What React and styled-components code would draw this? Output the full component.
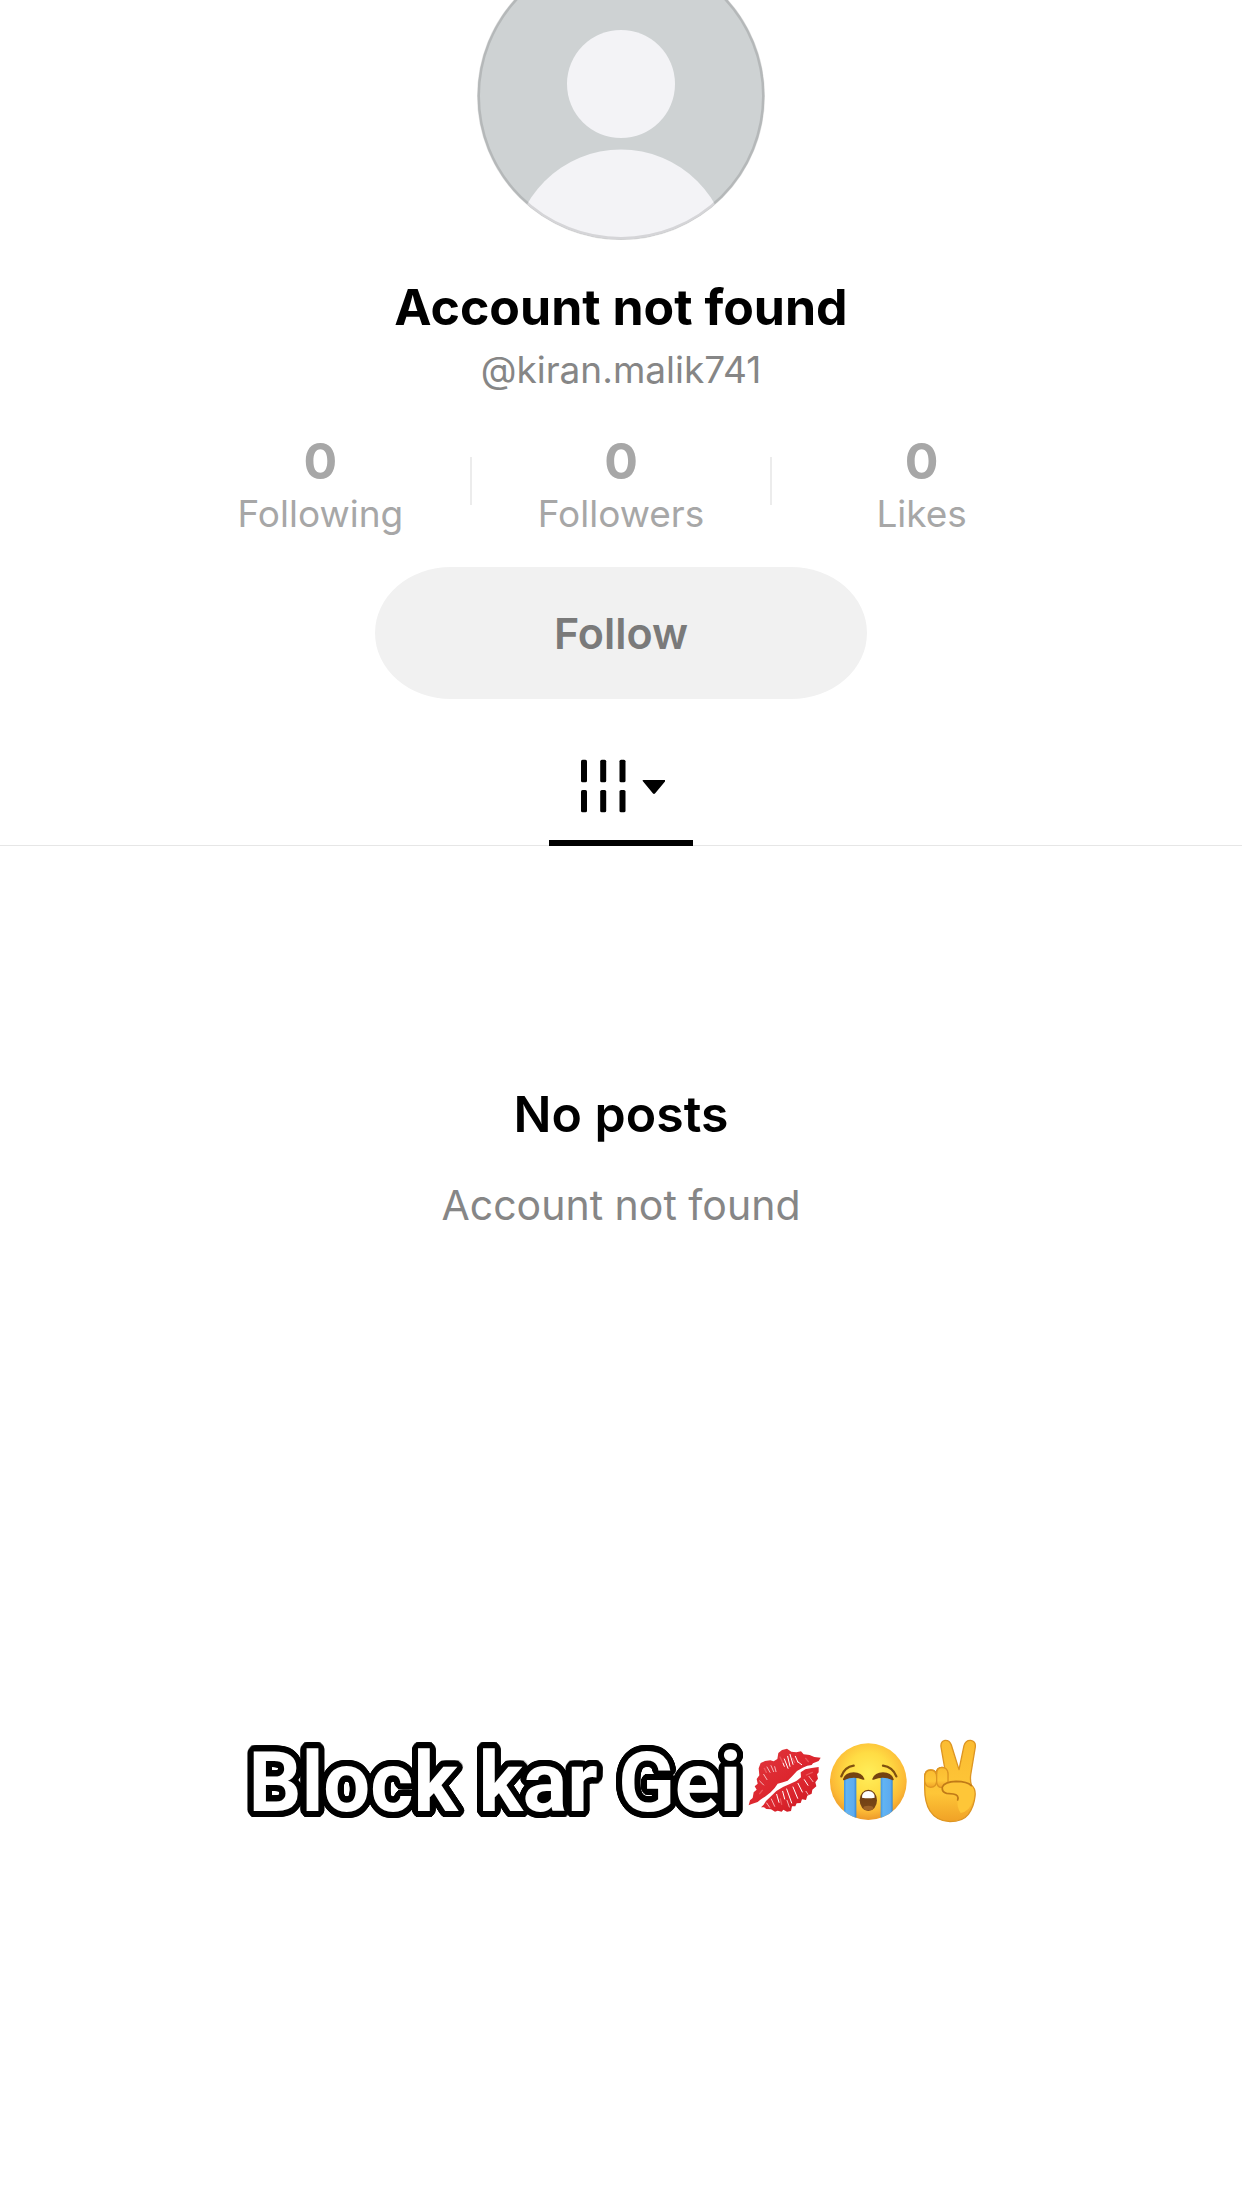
import React from 'react';
import styled, { createGlobalStyle } from 'styled-components';

const GlobalStyle = createGlobalStyle`
body{
    margin: 0;
    background: #fff;
    font-family: Inter, "Liberation Sans", sans-serif;
}
`;

// Rounded outline made of shadows set round a circle
const outline = (radius, color) =>
    Array.from({ length: 32 }, (_, i) => {
        const a = (i / 32) * Math.PI * 2;
        return `${(Math.cos(a) * radius).toFixed(2)}px ${(Math.sin(a) * radius).toFixed(2)}px 0 ${color}`;
    }).join(', ');

const Page = styled.div`
width: 100%;
min-height: 100vh;
display: flex;
flex-direction: column;
overflow: hidden;
background: #fff;
`;

//                         Profile Header                       //

const ProfileHeader = styled.header`
display: flex;
flex-direction: column;
align-items: center;
`;

const AvatarImage = styled.svg`
width: 288px;
height: 288px;
margin-top: -48px;
`;

const ProfileName = styled.h1`
margin: 37px 0 0;
font-size: 50px;
line-height: 60px;
font-weight: 700;
color: #000;
`;

const Handle = styled.p`
margin: 9px 0 0;
font-size: 37px;
line-height: 48px;
color: #868686;
`;

const Stats = styled.ul`
display: flex;
width: 100%;
max-width: 900px;
margin: 38px 0 0;
padding: 0;
list-style: none;
`;

const StatItem = styled.li`
flex: 1;
display: flex;
flex-direction: column;
align-items: center;
color: #a7a7a7;
`;

const StatValue = styled.strong`
font-size: 50px;
line-height: 58px;
font-weight: 700;
`;

const StatLabel = styled.span`
font-size: 37px;
line-height: 48px;
`;

const StatDivider = styled.li`
width: 2px;
height: 48px;
margin-top: 25px;
background: #ececec;
`;

const FollowButton = styled.button`
width: 492px;
height: 132px;
margin-top: 29px;
padding: 0;
border: 0;
border-radius: 76px / 66px;
background: #f1f1f1;
color: #7a7a7a;
font-family: inherit;
font-size: 43px;
font-weight: 600;
cursor: pointer;
`;

//                         Tabs                       //

const TabBar = styled.nav`
display: flex;
justify-content: center;
margin-top: 30px;
border-bottom: 1px solid #e6e6e6;
`;

const TabButton = styled.button`
display: flex;
align-items: center;
justify-content: center;
box-sizing: border-box;
width: 144px;
height: 117px;
margin-bottom: -1px;
padding: 2px 0 0;
border: 0;
border-bottom: 6px solid #000;
background: none;
cursor: pointer;
`;

const TabIcon = styled.svg`
width: 88px;
height: 54px;
`;

//                         Empty State                       //

const EmptyState = styled.main`
display: flex;
flex-direction: column;
align-items: center;
padding-top: 238px;
`;

const EmptyTitle = styled.h2`
margin: 0;
font-size: 50px;
line-height: 60px;
font-weight: 600;
color: #000;
`;

const EmptyText = styled.p`
margin: 36px 0 0;
font-size: 41px;
line-height: 50px;
color: #868686;
`;

//                         Caption                       //

const Caption = styled.footer`
display: flex;
align-items: center;
justify-content: center;
margin-top: 505px;
`;

const CaptionText = styled.span`
font-family: Roboto, "Liberation Sans", sans-serif;
font-size: 83px;
line-height: 96px;
font-weight: 700;
white-space: nowrap;
color: #fff;
text-shadow: ${outline(6, '#000')};
`;

const EmojiImage = styled.svg`
width: 84px;
height: 96px;
`;

const Avatar = () => (
    <AvatarImage viewBox="0 0 288 288" role="img" aria-label="Profile photo">
        <clipPath id="avatarClip">
            <circle cx="144" cy="144" r="143.5" />
        </clipPath>
        <g clipPath="url(#avatarClip)">
            <rect width="288" height="288" fill="#ced2d3" />
            <circle cx="144" cy="132" r="54" fill="#f3f3f6" />
            <circle cx="144" cy="305.5" r="108" fill="#f3f3f6" />
        </g>
        <circle cx="144" cy="144" r="142.5" fill="none" stroke="#000" strokeOpacity="0.12" strokeWidth="3" />
    </AvatarImage>
);

const GridMenuIcon = () => (
    <TabIcon viewBox="0 0 88 54" aria-hidden="true">
        {[4, 23.2, 42.5].map(x => (
            <React.Fragment key={x}>
                <rect x={x} y="0.7" width="6" height="22.6" rx="1.6" />
                <rect x={x} y="31" width="6" height="22.3" rx="1.6" />
            </React.Fragment>
        ))}
        <path d="M66.4 21h21.2q1.6 0 .5 1.300l-9.900 12q-1.200 1.200-2.400 0l-9.900-12q-1.100-1.300.5-1.300z" />
    </TabIcon>
);

const KissEmoji = () => (
    <EmojiImage viewBox="13 12 252 288" role="img" aria-label="Kiss mark">
        <defs>
            <linearGradient id="lipFill" x1="0" y1="0" x2="1" y2="1">
                <stop offset="0" stopColor="#e0383f" />
                <stop offset="0.5" stopColor="#dd272f" />
                <stop offset="1" stopColor="#c9151f" />
            </linearGradient>
        </defs>
        <path
            fill="url(#lipFill)"
            d="M33 223L37 208L45 201L48 184L57 176L51 166L60 158L57 144L65 133L63 112L69 96L82 90L98 88L108 91L119 84L122 66L133 57L148 53L161 62L176 64L190 61L198 70L216 72L230 78L249 80L243 90L226 97L222 102L209 104L195 110L178 120L162 137L150 149L136 154L120 158L111 171L99 184L82 197L68 206L60 213L42 219Z"
        />
        <path
            fill="url(#lipFill)"
            d="M70 229L78 221L85 210L100 196L116 180L136 168L158 158L176 150L190 139L189 124L203 115L222 111L243 108L243 124L238 130L241 143L233 154L236 166L224 176L222 188L209 194L205 207L193 205L189 216L177 217L173 226L163 226L160 240L148 242L137 236L132 242L120 239L112 242L100 235L86 234L79 229Z"
        />
        <g fill="none" stroke="#fff" strokeLinecap="round" strokeWidth="3">
            <path d="M140 84L151 112M150 76L157 106M157 70L166 100M173 76L181 94M180 92L192 101M136 96L140 106" />
            <path d="M88 108L97 124M100 104L108 122M111 107L115 122M78 130L88 146M66 150L78 162" strokeWidth="2" />
            <path d="M117 190L124 214M135 181L141 204M147 174L162 216M166 168L180 202M181 157L194 183M200 146L211 163" />
            <path d="M214 136L226 152M101 204L111 226M87 216L96 229M205 181L211 190M148 208L155 228" strokeWidth="2" />
        </g>
        <g fill="none" stroke="#ef6a6c" strokeLinecap="round" strokeWidth="4" opacity="0.7">
            <path d="M80 112L86 124M127 78L134 92M165 82L171 94M204 82L212 92M66 188L74 178M206 132L224 124M128 204L132 220" />
        </g>
    </EmojiImage>
);

const CryEmoji = () => (
    <EmojiImage viewBox="26 12 252 288" role="img" aria-label="Loudly crying face">
        <defs>
            <radialGradient id="faceFill" cx="0.5" cy="0.4" r="0.62">
                <stop offset="0" stopColor="#ffee5a" />
                <stop offset="0.45" stopColor="#ffdc44" />
                <stop offset="0.78" stopColor="#fcba36" />
                <stop offset="1" stopColor="#ea9428" />
            </radialGradient>
            <linearGradient id="tearFill" x1="0" y1="0" x2="1" y2="0">
                <stop offset="0" stopColor="#3f94de" />
                <stop offset="0.2" stopColor="#62b4f3" />
                <stop offset="0.8" stopColor="#5cabf0" />
                <stop offset="1" stopColor="#3385d2" />
            </linearGradient>
            <linearGradient id="mouthFill" x1="0" y1="0" x2="0" y2="1">
                <stop offset="0" stopColor="#6b3a12" />
                <stop offset="1" stopColor="#7d4a18" />
            </linearGradient>
            <clipPath id="faceClip">
                <circle cx="153" cy="152" r="115" />
            </clipPath>
        </defs>
        <circle cx="153" cy="152" r="115" fill="url(#faceFill)" />
        <g clipPath="url(#faceClip)">
            <path d="M80 138H117V270H80Z" fill="url(#tearFill)" />
            <path d="M190 138H226V270H190Z" fill="url(#tearFill)" />
        </g>
        <path d="M77 144Q84 124 109 124Q134 125 141 143Q142 148 137 146Q108 134 82 147Q76 149 77 144Z" fill="#754310" />
        <path d="M165 143Q172 125 197 124Q222 124 229 144Q230 149 224 147Q198 134 169 146Q164 148 165 143Z" fill="#754310" />
        <path d="M72 136Q82 108 109 104M197 104Q226 108 237 136" fill="none" stroke="#80500f" strokeWidth="7" strokeLinecap="round" />
        <ellipse cx="153" cy="208" rx="26" ry="32" fill="url(#mouthFill)" />
        <path d="M134 200Q134 180 153 180Q172 180 172 200Q153 204 134 200Z" fill="#fff" />
        <ellipse cx="153" cy="231" rx="15" ry="7" fill="#9c6128" />
    </EmojiImage>
);

const VictoryEmoji = () => (
    <EmojiImage viewBox="8 12 252 288" role="img" aria-label="Victory hand">
        <defs>
            <linearGradient id="handFill" x1="0" y1="0" x2="0" y2="1">
                <stop offset="0" stopColor="#fbbc31" />
                <stop offset="0.65" stopColor="#fec638" />
                <stop offset="1" stopColor="#f0a126" />
            </linearGradient>
        </defs>
        <g fill="url(#handFill)" stroke="#dd9522" strokeWidth="4" strokeLinejoin="round" strokeLinecap="round">
            <path d="M120 156L101 48Q99 31 113 28Q127 27 132 42L155 116L170 44Q175 27 190 28Q206 31 204 48L190 132Q188 148 192 162Q206 174 203 196Q200 226 183 250Q166 272 128 272Q88 271 68 240Q52 214 52 170V138Q52 118 70 117Q82 117 86 126Q88 109 104 109Q118 110 121 125Z" />
            <path d="M52 140Q52 117 70 117Q88 118 88 138V150Q87 169 70 169Q54 168 52 150Z" />
            <path d="M88 130Q88 109 104 109Q121 110 122 128V152Q118 166 105 170Q90 170 88 154Z" />
        </g>
        <path d="M106 166Q116 152 146 151Q182 151 194 166Q205 180 198 206Q188 240 160 246Q146 226 152 202Q156 192 142 190L118 187Q101 184 106 166Z" fill="#fec638" />
        <path d="M192 164Q180 151 146 151Q112 152 105 168Q103 184 118 187L138 189Q156 192 151 207" fill="none" stroke="#c07a18" strokeWidth="5" strokeLinecap="round" />
    </EmojiImage>
);

const STATS = [
    { value: 0, label: 'Following' },
    { value: 0, label: 'Followers' },
    { value: 0, label: 'Likes' },
];

const App = () => (
    <Page>
        <GlobalStyle />
        <ProfileHeader>
            <Avatar />
            <ProfileName>Account not found</ProfileName>
            <Handle>@kiran.malik741</Handle>
            <Stats>
                {STATS.map((stat, i) => (
                    <React.Fragment key={stat.label}>
                        {i > 0 && <StatDivider aria-hidden="true" />}
                        <StatItem>
                            <StatValue>{stat.value}</StatValue>
                            <StatLabel>{stat.label}</StatLabel>
                        </StatItem>
                    </React.Fragment>
                ))}
            </Stats>
            <FollowButton type="button">Follow</FollowButton>
        </ProfileHeader>
        <TabBar>
            <TabButton type="button" aria-label="Posts">
                <GridMenuIcon />
            </TabButton>
        </TabBar>
        <EmptyState>
            <EmptyTitle>No posts</EmptyTitle>
            <EmptyText>Account not found</EmptyText>
        </EmptyState>
        <Caption>
            <CaptionText>Block kar Gei</CaptionText>
            <KissEmoji />
            <CryEmoji />
            <VictoryEmoji />
        </Caption>
    </Page>
);

export default App;
